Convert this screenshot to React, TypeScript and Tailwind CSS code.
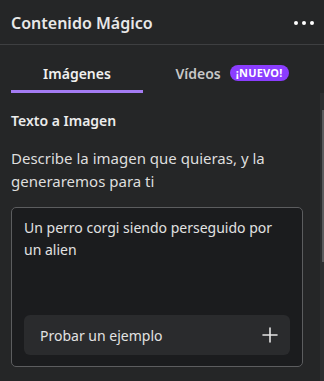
import React from "react";

export default function App() {
  const font = { fontFamily: '"Noto Sans", "Open Sans", sans-serif' };
  return (
    <div className="w-[324px] h-[381px] bg-[#252627] text-[#e8e8e8] overflow-hidden flex flex-col" style={font}>
      <div className="h-[45px] shrink-0 flex items-center justify-between pl-[11px] pr-[10px] pt-[1px] border-b border-[#3e3f41]">
        <span className="text-[16px] font-semibold">Contenido Mágico</span>
        <div className="flex items-center gap-[4px]">
          <span className="w-[4px] h-[4px] rounded-full bg-white" />
          <span className="w-[4px] h-[4px] rounded-full bg-white" />
          <span className="w-[4px] h-[4px] rounded-full bg-white" />
        </div>
      </div>
      <div className="flex pl-[11px] pr-[3px] shrink-0">
        <div className="w-[132px] h-[48px] pt-[11px] flex items-center justify-center border-b-[3px] border-[#a47cf3]">
          <span className="text-[14px] font-semibold text-[#f0f0f0]">Imágenes</span>
        </div>
        <div className="flex-1 h-[48px] pt-[11px] flex items-center justify-center gap-[9px] border-b-[3px] border-transparent">
          <span className="text-[14px] font-semibold text-[#c8c8c8]">Vídeos</span>
          <span className="h-[16px] px-[6px] rounded-full bg-[#8b3dff] text-white text-[11px] font-bold flex items-center tracking-[0.2px]">¡NUEVO!</span>
        </div>
      </div>
      <div className="flex flex-1 min-h-0">
        <div className="flex-1 pl-[11px] pr-[17px] pt-[18px]">
          <div className="text-[14px] font-semibold leading-[20px] text-[#ececec]">Texto a Imagen</div>
          <div className="mt-[16px] text-[15px] leading-[23px] text-[#dedede]">
            Describe la imagen que quieras, y la generaremos para ti
          </div>
          <div className="mt-[14px] h-[160px] rounded-[5px] border border-[#5c5d5f] bg-[#1b1c1e] px-[12px] pt-[9px] pb-[11px] flex flex-col justify-between">
            <div className="text-[14px] leading-[22px] text-[#e2e2e2]">
              Un perro corgi siendo perseguido por un alien
            </div>
            <div className="h-[40px] rounded-[6px] bg-[#2a2b2d] flex items-center justify-between pl-[16px] pr-[12px]">
              <span className="text-[14px] text-[#e2e2e2]">Probar un ejemplo</span>
              <svg width="16" height="16" viewBox="0 0 16 16" fill="none" stroke="#e4e4e4" strokeWidth="1.6" strokeLinecap="round">
                <path d="M8 1v14M1 8h14" />
              </svg>
            </div>
          </div>
        </div>
        <div className="w-[4px] bg-[#2d2e30] flex">
          <div className="ml-[2px] w-[2px] mt-[17px] h-[152px] bg-[#5a5b5d]" />
        </div>
      </div>
    </div>
  );
}
